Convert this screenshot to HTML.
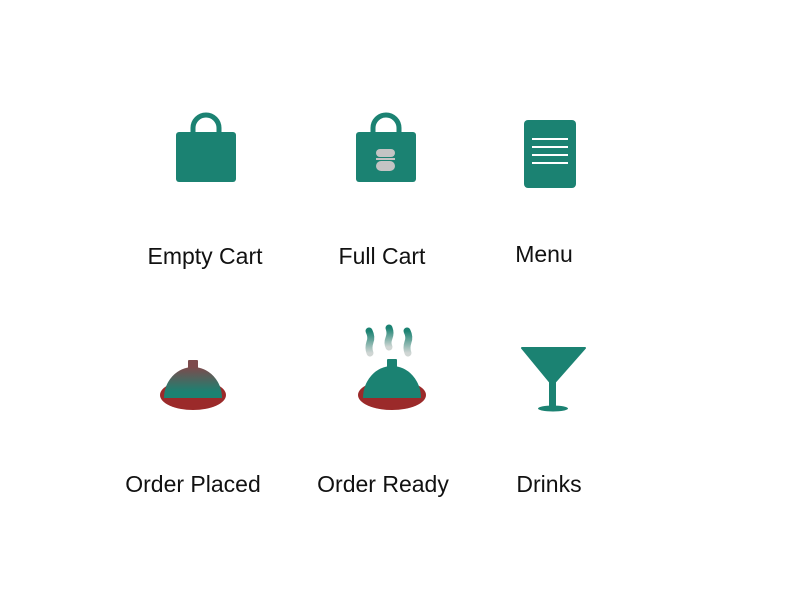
<!DOCTYPE html>
<html><head><meta charset="utf-8"><style>
html,body{margin:0;padding:0;background:#fff;width:800px;height:600px;overflow:hidden}
svg{position:absolute;left:0;top:0}
text{font-family:"Liberation Sans",sans-serif;font-size:23px;fill:#111;text-anchor:middle}
</style></head><body>
<svg width="800" height="600" viewBox="0 0 800 600">
<defs>
<linearGradient id="dome" x1="0" y1="0" x2="0" y2="1">
<stop offset="0" stop-color="#7d4a4c"/><stop offset="0.8" stop-color="#1b8272"/></linearGradient>
<linearGradient id="steam" x1="0" y1="0" x2="0" y2="1">
<stop offset="0" stop-color="#1b8272"/><stop offset="1" stop-color="#d0d6d4"/></linearGradient>
</defs>
<!-- Empty cart -->
<path d="M193 134 V128 A13 13 0 0 1 219 128 V134" fill="none" stroke="#1b8272" stroke-width="5"/>
<rect x="176" y="132" width="60" height="50" rx="3" fill="#1b8272"/>
<!-- Full cart -->
<path d="M373 134 V128 A13 13 0 0 1 399 128 V134" fill="none" stroke="#1b8272" stroke-width="5"/>
<rect x="356" y="132" width="60" height="50" rx="3" fill="#1b8272"/>
<rect x="376" y="149" width="19" height="8" rx="4" fill="#c4c4c4"/>
<rect x="376" y="158" width="19" height="2" fill="#c4c4c4"/>
<rect x="376" y="161" width="19" height="10" rx="5" fill="#c4c4c4"/>
<!-- Menu -->
<rect x="524" y="120" width="52" height="68" rx="4" fill="#1b8272"/>
<g stroke="#fff" stroke-width="2"><line x1="532" y1="139" x2="568" y2="139"/><line x1="532" y1="147" x2="568" y2="147"/><line x1="532" y1="155" x2="568" y2="155"/><line x1="532" y1="163" x2="568" y2="163"/></g>
<!-- Order placed -->
<ellipse cx="193" cy="395" rx="33" ry="15" fill="#9b2a2a"/>
<rect x="188" y="360" width="10" height="9" rx="1" fill="#7d4a4c"/>
<path d="M164 398 A29 31 0 0 1 222 398 Z" fill="url(#dome)"/>
<!-- Order ready -->
<ellipse cx="392" cy="395" rx="34" ry="15" fill="#9b2a2a"/>
<rect x="387" y="359" width="10" height="9" rx="1" fill="#1b8272"/>
<path d="M363 398 A29 32 0 0 1 421 398 Z" fill="#1b8272"/>
<g fill="none" stroke="url(#steam)" stroke-width="7" stroke-linecap="round">
<path d="M369 331 Q372 337 370 342 Q368 348 370 353"/>
<path d="M389 328 Q391 333 389 338 Q387 343 389 347"/>
<path d="M407 331 Q410 337 408 342 Q406 348 408 353"/>
</g>
<!-- Drinks -->
<path d="M522 348 H585 L555 382 H550 Z" fill="#1b8272" stroke="#1b8272" stroke-width="2" stroke-linejoin="round"/>
<rect x="549" y="378" width="7" height="30" fill="#1b8272"/>
<ellipse cx="553" cy="408.5" rx="15" ry="3" fill="#1b8272"/>
<text x="205" y="264">Empty Cart</text>
<text x="382" y="264">Full Cart</text>
<text x="544" y="262">Menu</text>
<text x="193" y="492">Order Placed</text>
<text x="383" y="492">Order Ready</text>
<text x="549" y="492">Drinks</text>
</svg>
</body></html>
